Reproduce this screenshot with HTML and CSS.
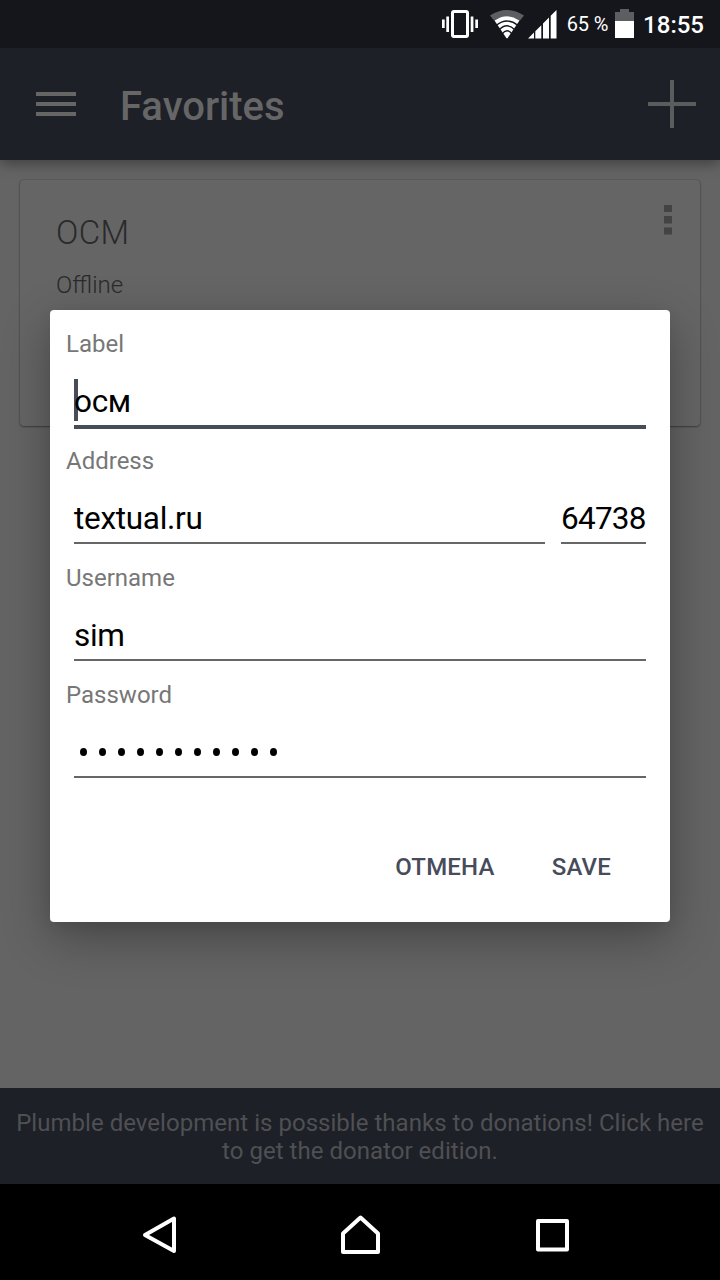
FILE: index.html
```html
<!DOCTYPE html>
<html lang="en">
<head>
  <meta charset="UTF-8">
  <meta name="viewport" content="width=device-width, initial-scale=1.0">
  <title>Favorites</title>
  <link rel="stylesheet" href="styles.css">
</head>
<body>
  <div class="screen">
    <header class="status-bar">
      <svg class="status-icons" width="117" height="48" viewBox="0 0 117 48">
        <!-- vibrate -->
        <rect x="12.5" y="11.5" width="15" height="25" rx="1.5" fill="none" stroke="#fff" stroke-width="3"/>
        <path d="M2 19.500h2.700v8.500h-2.700zM6.300 16.500h2.700v15.500h-2.700zM30.700 16.500h2.700v15.500h-2.700zM35.300 19.500h2.700v8.500h-2.700z" fill="#fff"/>
        <!-- wifi -->
        <path d="M50 15.500Q67 4.500 84 15.500L80 20.500Q67 12.500 54 20.500Z" fill="#5d5e61"/>
        <path d="M54.500 20.500Q67 12 79.500 20.500L67.500 38.300h-1Z" fill="#fff"/>
        <path d="M56 25.500Q67 16.500 78 25.500M59 30Q67 21.500 75 30M62 34Q67 27.500 72 34" fill="none" stroke="#14161b" stroke-width="1.3"/>
        <!-- signal -->
        <path d="M88 38.500l6-6v6zM95.300 31.200l6-6v13.300h-6zM103 23.500l6-6v21h-6zM110.700 15.800l5.800-5.800v28.500h-5.800z" fill="#fff"/>
      </svg>
      <span class="battery-text">65 %</span>
      <svg class="battery" width="19" height="30" viewBox="0 0 19 30">
        <path d="M5 0h9v3h5v9h-19v-9h5z" fill="#5d5e61"/>
        <path d="M0 12h19v17h-19z" fill="#fff"/>
      </svg>
      <span class="clock">18:55</span>
    </header>

    <div class="app-bar">
      <svg width="40" height="24" viewBox="0 0 40 24">
        <path d="M0 0h40v4H0zM0 10h40v4H0zM0 20h40v4H0z" fill="#666"/>
      </svg>
      <h1>Favorites</h1>
      <svg class="add" width="48" height="48" viewBox="0 0 48 48">
        <path d="M22 0h4v22h22v4h-22v22h-4v-22h-22v-4h22z" fill="#5a5c5d"/>
      </svg>
    </div>

    <main class="content">
      <div class="card">
        <div class="card-text">
          <h2>ОСМ</h2>
          <p>Offline</p>
        </div>
        <svg class="more" width="8" height="30" viewBox="0 0 8 30">
          <path d="M0 0h8v7H0zM0 11h8v7.500H0zM0 22.500h8v7H0z" fill="#434343"/>
        </svg>
      </div>
    </main>

    <div class="donate">Plumble development is possible thanks to donations! Click here to get the donator edition.</div>

    <nav class="nav-bar">
      <svg width="44" height="44" viewBox="0 0 44 44">
        <path d="M32 4.500v32.500L3 21z"/>
      </svg>
      <svg width="44" height="44" viewBox="0 0 44 44">
        <path d="M5 38V19.500L22.500 3.500L40 19.500V38z"/>
      </svg>
      <svg width="44" height="44" viewBox="0 0 44 44">
        <path d="M8 7h29v28.500h-29z"/>
      </svg>
    </nav>

    <div class="dialog">
      <div class="group">
        <div class="label">Label</div>
        <div class="field focused"><span class="cursor"></span><span>осм</span></div>
      </div>
      <div class="group">
        <div class="label">Address</div>
        <div class="row">
          <div class="field address">textual.ru</div>
          <div class="field port">64738</div>
        </div>
      </div>
      <div class="group">
        <div class="label">Username</div>
        <div class="field">sim</div>
      </div>
      <div class="group">
        <div class="label">Password</div>
        <div class="field dots">
          <i></i><i></i><i></i><i></i><i></i><i></i><i></i><i></i><i></i><i></i><i></i>
        </div>
      </div>
      <div class="actions">
        <span>ОТМЕНА</span>
        <span>SAVE</span>
      </div>
    </div>
  </div>
</body>
</html>
```

FILE: styles.css
```css
* {
  box-sizing: border-box;
}
body {
  margin: 0;
  font-family: Roboto, sans-serif;
  background: #000;
}
h1, h2, p {
  margin: 0;
}
svg {
  display: block;
  flex-shrink: 0;
}
.screen {
  position: relative;
  width: 720px;
  height: 1280px;
  display: flex;
  flex-direction: column;
  overflow: hidden;
}

/* top bars */
.status-bar {
  position: relative;
  z-index: 1;
  height: 48px;
  display: flex;
  justify-content: flex-end;
  align-items: center;
  padding-right: 16px;
  background: #14161b;
  color: #fff;
}
.battery-text {
  margin-left: 10px;
  font-size: 20px;
  letter-spacing: -0.2px;
}
.battery {
  margin-left: 7px;
}
.clock {
  margin-left: 9px;
  font-size: 24px;
  font-weight: 500;
  padding-top: 2px;
}
.app-bar {
  position: relative;
  height: 112px;
  display: flex;
  align-items: center;
  padding: 0 24px 0 36px;
  background: #1d2027;
  box-shadow: 0 4px 12px rgba(0, 0, 0, 0.35);
}
.app-bar h1 {
  margin-left: 44px;
  padding-top: 4px;
  font-size: 40px;
  font-weight: 500;
  color: #666;
}
.add {
  margin-left: auto;
}

/* server list */
.content {
  flex: 1;
  padding: 20px;
  background: #646464;
}
.card {
  height: 246px;
  display: flex;
  justify-content: space-between;
  padding: 26px 28px 0 36px;
  border-radius: 4px;
  background: #656565;
  box-shadow: 0 1px 2px rgba(0, 0, 0, 0.35), 0 0 1px 1px rgba(0, 0, 0, 0.08);
}
.card h2 {
  font-size: 33px;
  font-weight: 300;
  line-height: 54px;
  letter-spacing: 0.3px;
  color: #2a2a2a;
}
.card p {
  font-size: 24px;
  font-weight: 300;
  line-height: 50px;
  color: #2a2a2a;
}
.more {
  margin-top: -1px;
}

/* bottom bars */
.donate {
  height: 96px;
  padding: 21px 12px;
  background: #1d2027;
  color: #4f5053;
  font-size: 24px;
  line-height: 28px;
  letter-spacing: 0.03px;
  text-align: center;
}
.nav-bar {
  height: 96px;
  display: flex;
  justify-content: space-between;
  align-items: center;
  padding: 7px 146px 0 142px;
  background: #000;
}
.nav-bar path {
  fill: none;
  stroke: #fff;
  stroke-width: 4;
  stroke-linejoin: round;
}
.nav-bar svg:nth-child(2) {
  margin-left: 4px;
}

/* edit server dialog */
.dialog {
  position: absolute;
  top: 310px;
  left: 50px;
  width: 620px;
  height: 612px;
  padding: 16px 16px 0;
  border-radius: 4px;
  background: #fff;
  box-shadow: 0 16px 48px rgba(0, 0, 0, 0.3), 0 4px 14px rgba(0, 0, 0, 0.06);
}
.group {
  height: 117px;
}
.label {
  height: 36px;
  line-height: 36px;
  font-size: 24px;
  color: #777;
}
.field {
  height: 65px;
  margin: 0 8px;
  padding-top: 21px;
  border-bottom: 2px solid #666;
  font-size: 31.5px;
  line-height: 38px;
  letter-spacing: -0.3px;
  color: #000;
}
.field.focused {
  position: relative;
  height: 67px;
  border-bottom: 4px solid #474c5b;
}
.cursor {
  position: absolute;
  top: 17px;
  left: 0;
  width: 4px;
  height: 42px;
  background: #474c5b;
}
.focused span:last-child {
  position: relative;
}
.row {
  display: flex;
}
.address {
  flex: 1;
}
.port {
  width: 85px;
  letter-spacing: -0.75px;
}
.dots {
  display: flex;
  gap: 12px;
  padding: 35px 0 0 6px;
}
.dots i {
  width: 7px;
  height: 8px;
  border-radius: 50%;
  background: #000;
}
.actions {
  display: flex;
  justify-content: flex-end;
  gap: 57px;
  padding: 59px 43px 0 0;
  font-size: 24px;
  font-weight: 500;
  line-height: 28px;
  letter-spacing: 0.2px;
  color: #474c5b;
}
```
